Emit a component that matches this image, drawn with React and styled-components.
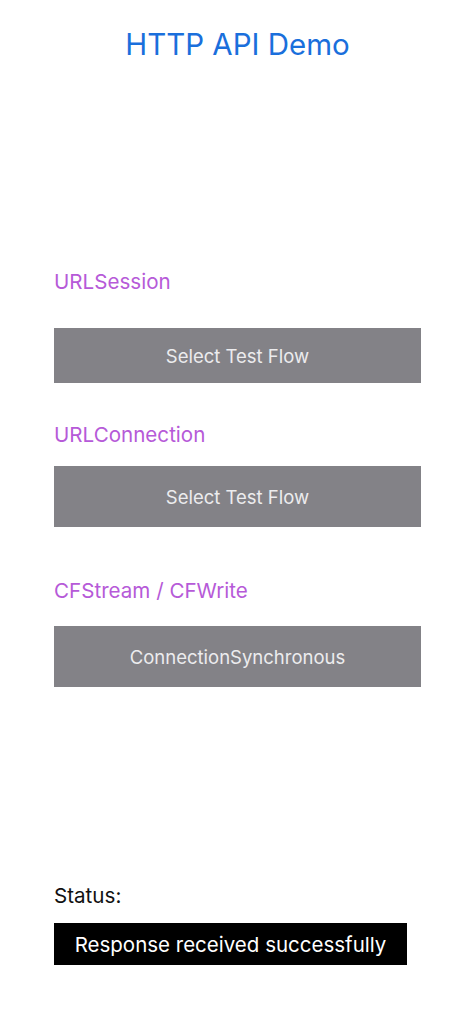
import React from "react";
import styled, { createGlobalStyle } from "styled-components";

const Global = createGlobalStyle`
  html, body { margin: 0; padding: 0; background: #ffffff; }
  body { font-family: Inter, "Liberation Sans", sans-serif; }
`;

const Page = styled.div`
  width: 471px;
  height: 1024px;
  display: flex;
  flex-direction: column;
  padding: 26px 50px 0 54px;
  box-sizing: border-box;
`;

const Title = styled.h1`
  margin: 0;
  font-size: 29.5px;
  line-height: 36px;
  font-weight: 400;
  color: #1a6fdc;
  text-align: center;
  width: 367px;
`;

const Section = styled.section`
  display: flex;
  flex-direction: column;
  width: 367px;
  margin-top: ${(p) => p.$top}px;
  gap: ${(p) => p.$gap}px;
`;

const Label = styled.div`
  font-size: 20.6px;
  line-height: 26px;
  color: #b65ad8;
`;

const FlowButton = styled.button`
  height: ${(p) => p.$h}px;
  width: 100%;
  border: none;
  background: #838287;
  color: #ececee;
  font-family: Inter, "Liberation Sans", sans-serif;
  font-size: 18.5px;
  padding: 0;
  cursor: pointer;
`;

const StatusLabel = styled.div`
  font-size: 20.6px;
  line-height: 26px;
  color: #111;
`;

const StatusBox = styled.div`
  width: 353px;
  height: 42px;
  background: #000;
  color: #fff;
  font-size: 20.5px;
  display: flex;
  align-items: center;
  justify-content: center;
`;

export default function App() {
  return (
    <>
      <Global />
      <Page>
        <Title>HTTP API Demo</Title>
        <Section $top={207} $gap={33}>
          <Label>URLSession</Label>
          <FlowButton $h={55}>Select Test Flow</FlowButton>
        </Section>
        <Section $top={39} $gap={18}>
          <Label>URLConnection</Label>
          <FlowButton $h={61}>Select Test Flow</FlowButton>
        </Section>
        <Section $top={51} $gap={22}>
          <Label>CFStream / CFWrite</Label>
          <FlowButton $h={61}>ConnectionSynchronous</FlowButton>
        </Section>
        <Section $top={196} $gap={14}>
          <StatusLabel>Status:</StatusLabel>
          <StatusBox>Response received successfully</StatusBox>
        </Section>
      </Page>
    </>
  );
}
